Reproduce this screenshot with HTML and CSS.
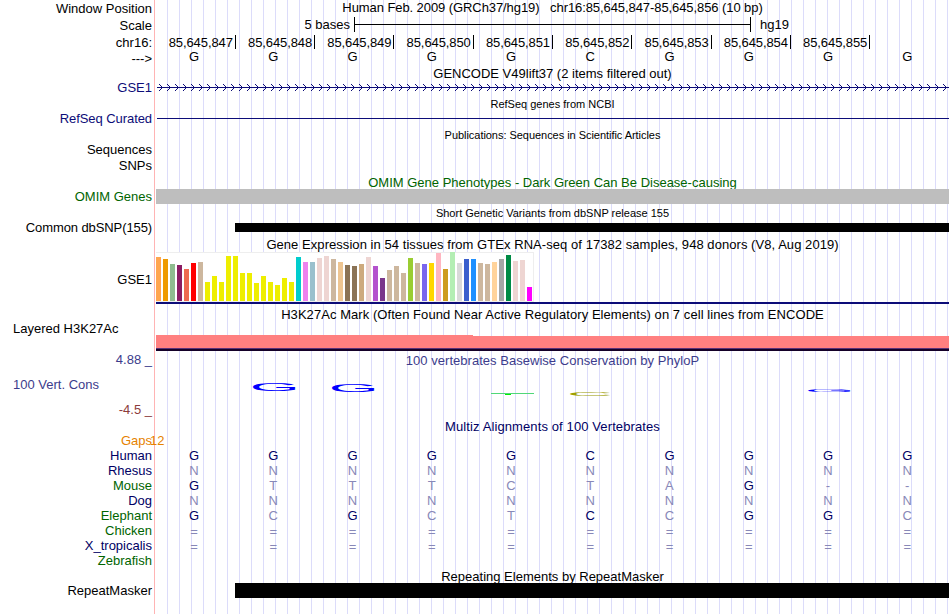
FILE: index.html
```html
<!DOCTYPE html>
<html lang="en">
<head>
<meta charset="utf-8">
<title>chr16:85,645,847-85,645,856</title>
<link rel="stylesheet" href="styles.css">
</head>
<body>
<main class="browser">
  <div class="row r-window"><div class="label">Window Position</div><div class="track title"><span class="t-pos">Human Feb. 2009 (GRCh37/hg19) &nbsp; chr16:85,645,847-85,645,856 (10 bp)</span></div></div>
  <div class="row r-scale"><div class="label">Scale</div><div class="track scale"><span class="scale-from">5 bases</span><i class="ruler"></i><span class="scale-db">hg19</span></div></div>
  <div class="row r-chrom"><div class="label">chr16:</div><div class="track positions" id="positions"></div></div>
  <div class="row r-bases"><div class="label">---&gt;</div><div class="track bases" data-seq="GGGGGCGGGG"></div></div>

  <div class="row r-t14"><div></div><div class="track title"><span class="t-gencode">GENCODE V49lift37 (2 items filtered out)</span></div></div>
  <div class="row r-16"><div class="label navy">GSE1</div><div class="track">
    <svg class="intron" width="792" height="16">
      <defs><pattern id="chev" width="8" height="16" patternUnits="userSpaceOnUse"><path d="M2 4h1v1h1v1h1v1h1v1h-1v1h-1v1h-1v1h-1v-1h1v-1h1v-1h1v-1h-1v-1h-1v-1h-1z" fill="#0c0c78" shape-rendering="crispEdges"/></pattern></defs>
      <rect width="792" height="16" fill="url(#chev)"/><rect y="7" width="792" height="1" fill="#0c0c78"/>
    </svg></div></div>
  <div class="row r-15"><div></div><div class="track title small"><span class="t-refseq">RefSeq genes from NCBI</span></div></div>
  <div class="row r-16"><div class="label navy l-refseq">RefSeq Curated</div><div class="track"><i class="thin-line"></i></div></div>
  <div class="row r-15"><div></div><div class="track title small"><span class="t-pubs">Publications: Sequences in Scientific Articles</span></div></div>
  <div class="row r-16"><div class="label">Sequences</div><div class="track"></div></div>
  <div class="row r-17"><div class="label">SNPs</div><div class="track"></div></div>
  <div class="row r-t14"><div></div><div class="track title green"><span class="t-omim">OMIM Gene Phenotypes - Dark Green Can Be Disease-causing</span></div></div>
  <div class="row r-15"><div class="label green">OMIM Genes</div><div class="track"><i class="omim-bar"></i></div></div>
  <div class="row r-dbsnp-title"><div></div><div class="track title small"><span class="t-dbsnp">Short Genetic Variants from dbSNP release 155</span></div></div>
  <div class="row r-17"><div class="label l-dbsnp">Common dbSNP(155)</div><div class="track"><i class="snp-bar"></i></div></div>

  <div class="row r-15"><div></div><div class="track title"><span class="t-gtex">Gene Expression in 54 tissues from GTEx RNA-seq of 17382 samples, 948 donors (V8, Aug 2019)</span></div></div>
  <div class="row r-gtex"><div class="label">GSE1</div><div class="track"><div class="gtex" id="gtex"></div><i class="gene-line"></i></div></div>

  <div class="row r-t14"><div></div><div class="track title"><span class="t-h3k">H3K27Ac Mark (Often Found Near Active Regulatory Elements) on 7 cell lines from ENCODE</span></div></div>
  <div class="row r-h3k"><div class="label left">Layered H3K27Ac</div><div class="track h3k"><i class="wave-a"></i><i class="wave-b"></i></div></div>

  <div class="row r-cons">
    <div class="cons-labels"><span class="phylo">4.88 _</span><span class="phylo cons-name">100 Vert. Cons</span><span class="low">-4.5 _</span></div>
    <div class="track cons"><div class="title phylo"><span class="t-phylo">100 vertebrates Basewise Conservation by PhyloP</span></div>
      <svg class="logo" width="793" height="30" viewBox="156 372 793 30">
        <text class="base-g" transform="translate(249.8 390.8) scale(4.95 .87)">G</text>
        <text class="base-g" transform="translate(328.8 391.8) scale(4.95 .87)">G</text>
        <rect x="491" y="393" width="43" height="1" fill="#50d878"/><rect x="505" y="394" width="6" height="1" fill="#00f000"/>
        <text class="base-c" transform="translate(567 395.8) scale(4.85 .34)">C</text>
        <text class="base-g" transform="translate(804.8 391.8) scale(4.95 .33)">G</text>
      </svg></div>
  </div>

  <div class="row r-t14"><div></div><div class="track title midnight"><span class="t-multiz">Multiz Alignments of 100 Vertebrates</span></div></div>
  <div class="row r-15"><div class="label gaps">Gaps</div><div class="track gaps"><span class="gap-count">12</span></div></div>
  <div class="row r-15"><div class="label midnight">Human</div><div class="track bases align" data-seq="GGGGGCGGGG"></div></div>
  <div class="row r-15"><div class="label midnight">Rhesus</div><div class="track bases align" data-seq="NNNNNNNNNN"></div></div>
  <div class="row r-15"><div class="label green">Mouse</div><div class="track bases align" data-seq="GTTTCTAG--"></div></div>
  <div class="row r-15"><div class="label midnight">Dog</div><div class="track bases align" data-seq="NNNNNNNNNN"></div></div>
  <div class="row r-15"><div class="label green">Elephant</div><div class="track bases align" data-seq="GCGCTCCGGC"></div></div>
  <div class="row r-15"><div class="label green">Chicken</div><div class="track bases align unaligned" data-seq="=========="></div></div>
  <div class="row r-15"><div class="label midnight">X_tropicalis</div><div class="track bases align unaligned" data-seq="=========="></div></div>
  <div class="row r-15"><div class="label green">Zebrafish</div><div class="track"></div></div>
  <div class="row r-repeat-title"><div></div><div class="track title"><span class="t-repeat">Repeating Elements by RepeatMasker</span></div></div>
  <div class="row r-15"><div class="label">RepeatMasker</div><div class="track"><i class="repeat-bar"></i></div></div>
</main>
<script src="script.js"></script>
</body>
</html>
```
FILE: styles.css
```css
* { box-sizing: border-box; }
body { margin: 0; background: #fff; }

.browser {
  width: 949px;
  height: 614px;
  overflow: hidden;
  font: 13px/15px "Liberation Sans", Arial, sans-serif;
  color: #000;
  background:
    linear-gradient(#ffb4b4, #ffb4b4) 154px 0 / 1px 100% no-repeat,
    repeating-linear-gradient(to right, #dcdcfa 0 1px, transparent 1px 12px) 167px 0 / 782px 100% no-repeat;
}

.row { display: grid; grid-template-columns: 152px 793px; column-gap: 4px; white-space: nowrap; }
.label { text-align: right; }
.label.left { text-align: left; padding-left: 13px; }
.track { min-width: 0; }
.track i { display: block; }
.title { text-align: center; }
.title.small { font-size: 11px; padding-top: 1px; }

.t-pos { letter-spacing: -.08px; }
.t-pubs { letter-spacing: -.04px; }
.t-gtex { letter-spacing: .055px; }
.t-h3k { letter-spacing: .06px; }
.t-phylo { letter-spacing: .03px; }
.t-multiz { letter-spacing: .11px; }
.l-refseq { letter-spacing: -.07px; }
.l-dbsnp { letter-spacing: -.1px; }

.r-window { height: 17px; }
.r-window .label { padding-top: 1px; }
.r-scale { height: 17px; }
.r-scale .label { padding-top: 1px; }
.r-chrom { height: 15px; }
.r-chrom .label { padding-top: 1px; }
.r-bases { height: 17px; }
.r-bases .label { padding-top: 2px; }
.r-t14 { height: 14px; }
.r-15 { height: 15px; }
.r-16 { height: 16px; }
.r-17 { height: 17px; }
.r-dbsnp-title { height: 16px; padding-top: 1px; }
.r-gtex { height: 55px; }
.r-gtex .label { padding-top: 20px; }
.r-h3k { height: 31px; }
.r-cons { height: 67px; }
.r-repeat-title { height: 15px; padding-top: 1px; }

.navy { color: #0c0c78; }
.midnight { color: #000064; }
.green { color: #006400; }
.phylo { color: #3c3c8c; }
.low { color: #8c3c3c; }
.gaps { color: #e68200; }

.scale { display: flex; }
.scale-from { width: 194px; text-align: right; }
.ruler {
  width: 397px;
  height: 15px;
  margin-left: 4px;
  border: solid #000;
  border-width: 0 1px;
  background: linear-gradient(#000, #000) 0 7px / 100% 1px no-repeat;
}
.scale-db { margin-left: 9px; }

.positions { display: grid; grid-template-columns: repeat(10, 79.3px); margin-left: .5px; }
.positions span { height: 14px; margin-top: 1px; line-height: 16px; text-align: right; letter-spacing: -.1px; padding-right: 2px; border-right: 1px solid #000; }
.positions span:last-child { border: 0; }

.bases { display: grid; grid-template-columns: repeat(10, 79.25px); margin-left: -1.7px; text-align: center; }
.align { color: #8888b8; }
.align .match { color: #000064; }
.align.unaligned span { color: #8888b8; }
.unaligned { padding-top: 1px; }

.intron { display: block; margin-left: 1px; }
.thin-line { height: 1px; margin: 7px 0 0 1px; background: #0c0c78; }
.omim-bar { height: 15px; background: #bebebe; }
.snp-bar { height: 9px; margin: 3px 0 0 79px; background: #000; }
.repeat-bar { height: 15px; margin-left: 79px; background: #000; }

.gtex {
  display: flex;
  align-items: flex-end;
  gap: 2px;
  width: 378px;
  height: 50px;
  background: #fff;
  border: solid #eee;
  border-width: 1px 1px 1px 0;
}
.gtex i { width: 5px; flex: none; }
.gene-line { height: 2px; background: #0c0c78; }

.h3k { display: flex; align-items: flex-end; height: 30px; }
.h3k i { background: linear-gradient(to top, #140028 0 2px, #5a3278 2px 3px, #ff8080 3px); }
.wave-a { width: 317px; height: 16px; }
.wave-b { flex: 1; height: 15px; }

.cons-labels { display: flex; flex-direction: column; text-align: right; }
.cons-name { text-align: left; padding-left: 13px; margin: 10px 0; }
.cons .title { padding-top: 1px; }
.logo { display: block; margin-top: 4px; }
.logo text { font: 13px "Liberation Sans", Arial, sans-serif; }
.base-g { fill: #00f; }
.base-c { fill: #a0a000; }
.gap-count { margin-left: -6px; }
```
FILE: script.js
```js
const reference = "GGGGGCGGGG";

document.querySelectorAll(".bases").forEach((row) => {
  [...row.dataset.seq].forEach((base, i) => {
    const cell = document.createElement("span");
    cell.textContent = base;
    if (base === reference[i]) cell.className = "match";
    row.append(cell);
  });
});

const positions = document.getElementById("positions");
for (let p = 85645847; p <= 85645855; p++) {
  const cell = document.createElement("span");
  cell.textContent = p.toLocaleString("en-US");
  positions.append(cell);
}
positions.append(document.createElement("span"));

const Y = "EEEE00";
const tissueColors = ["FFA54F", "EE9A00", "8FBC8F", "8B1C62", "EE6A50", "FF0000", "CDB79E",
  Y, Y, Y, Y, Y, Y, Y, Y, Y, Y, Y, Y, Y,
  "00CDCD", "EE82EE", "9AC0CD", "EED5D2", "EED5D2", "CDB79E", "EEC591", "8B7355", "8B7355",
  "CDAA7D", "EED5D2", "B452CD", "7A378B", "CDB79E", "CDB79E", "CDB79E", "9ACD32", "CDB79E",
  "7A67EE", "FFD700", "FFB6C1", "CD9B1D", "B4EEB4", "D9D9D9", "3A5FCD", "1E90FF", "CDB79E",
  "CDB79E", "FFD39B", "A6A6A6", "008B45", "EED5D2", "EED5D2", "FF00FF"];
const expression = [44, 42, 37, 36, 32, 38, 39, 19, 25, 19, 45, 45, 28, 28, 18, 25, 19, 16, 23, 19,
  44, 39, 39, 43, 45, 42, 39, 36, 35, 37, 44, 35, 23, 31, 35, 28, 43, 38, 37, 38, 48, 32, 49, 38,
  42, 42, 38, 37, 39, 42, 46, 40, 41, 14];
const gtex = document.getElementById("gtex");
expression.forEach((height, i) => {
  const bar = document.createElement("i");
  bar.style.height = height + "px";
  bar.style.background = "#" + tissueColors[i];
  gtex.append(bar);
});
```
